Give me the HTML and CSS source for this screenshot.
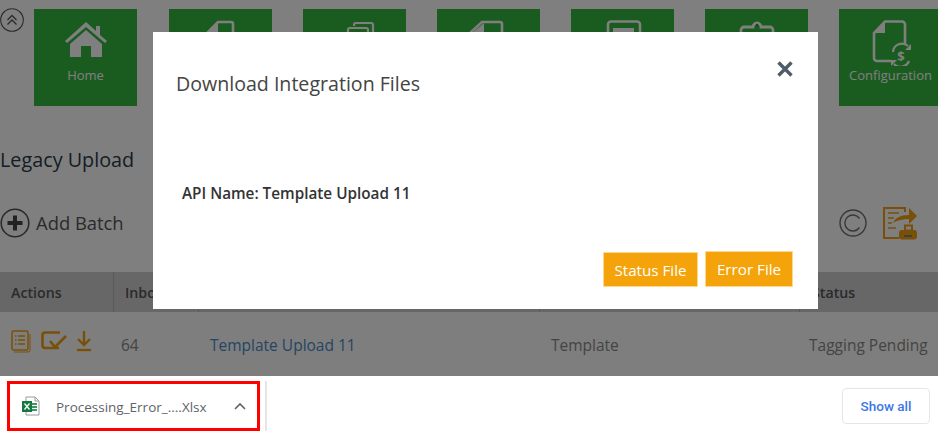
FILE: index.html
```html
<!DOCTYPE html>
<html lang="en">
<head>
<meta charset="utf-8">
<title>Download Integration Files</title>
<link rel="stylesheet" href="styles.css">
</head>
<body>
<div class="page">
  <div class="nav">
    <svg class="collapse" viewBox="0 0 24 24" width="24" height="24"><circle cx="12" cy="12" r="11.300" fill="none" stroke="#555" stroke-width="1.100"/><path d="M7.500 12l4.500-4.500 4.500 4.500M7.500 16.500l4.500-4.500 4.500 4.500" fill="none" stroke="#555" stroke-width="1.300"/></svg>
    <div class="tiles">
      <div class="tile">
        <svg class="tile-icon" viewBox="0 0 44 38" width="44" height="38"><path d="M1 21L22 2l10 9V6h4v9l7 6-2 2L22 7 3 23z" fill="#fff"/><path d="M6 24L22 10l16 14v13H27V26H17v11H6z" fill="#fff"/></svg>
        <span class="tile-label">Home</span>
      </div>
      <div class="tile"><svg class="tile-icon" viewBox="0 0 44 38" width="44" height="38"><path d="M9 14V12L19 2h13a2 2 0 0 1 2 2v20" fill="none" stroke="#fff" stroke-width="2.600"/><path d="M19 3v10H9z" fill="#fff"/></svg></div>
      <div class="tile"><svg class="tile-icon" viewBox="0 0 44 38" width="44" height="38"><path d="M21 6V5a2 2 0 0 1 2-2h15a2 2 0 0 1 2 2v18" fill="none" stroke="#fff" stroke-width="2.200"/><path d="M15 20V10a2 2 0 0 1 2-2h16a2 2 0 0 1 2 2v14" fill="none" stroke="#fff" stroke-width="2.200"/></svg></div>
      <div class="tile"><svg class="tile-icon" viewBox="0 0 44 38" width="44" height="38"><path d="M4 14v-2L15 2h18a2 2 0 0 1 2 2v20" fill="none" stroke="#fff" stroke-width="2.600"/><path d="M17 3v10H5z" fill="#fff"/></svg></div>
      <div class="tile"><svg class="tile-icon" viewBox="0 0 44 38" width="44" height="38"><rect x="7" y="1.500" width="32" height="26" rx="3" fill="none" stroke="#fff" stroke-width="2.600"/><rect x="12" y="8" width="21" height="5" fill="#fff"/></svg></div>
      <div class="tile"><svg class="tile-icon" viewBox="0 0 44 38" width="44" height="38"><path d="M6 30V10a3 3 0 0 1 3-3h9a4 4 0 0 1 8 0h9a3 3 0 0 1 3 3v20" fill="none" stroke="#fff" stroke-width="2.800"/><circle cx="22" cy="5" r="1.200" fill="#25882e"/></svg></div>
      <div class="tile">
        <svg class="tile-icon" viewBox="0 0 44 46" width="44" height="46"><path d="M22 41H8a3 3 0 0 1-3-3V13L16 1.500h17a3 3 0 0 1 3 3V25" fill="none" stroke="#fff" stroke-width="2.600"/><path d="M16 3v10H6z" fill="#fff"/><path d="M24 32a9 9 0 0 1 15-6M40 41a9 9 0 0 1-15 3" fill="none" stroke="#fff" stroke-width="2.200"/><path d="M36 30h6v-6zM28 40h-6v6z" fill="#fff"/><text x="32" y="40.500" class="dollar">$</text></svg>
        <span class="tile-label">Configuration</span>
      </div>
    </div>
  </div>
  <h1 class="title">Legacy Upload</h1>
  <div class="toolbar">
    <div class="add">
      <svg viewBox="0 0 30 30" width="30" height="30"><circle cx="15" cy="15" r="13.800" fill="none" stroke="#555" stroke-width="1.600"/><path d="M15 7.500v15M7.500 15h15" stroke="#444" stroke-width="4"/></svg>
      <span class="add-label">Add Batch</span>
    </div>
    <div class="tools">
      <svg viewBox="0 0 28 28" width="28" height="28"><circle cx="14" cy="14" r="13" fill="none" stroke="#707070" stroke-width="1.400"/><path d="M20.500 9.500a8 8 0 1 0 0 9" fill="none" stroke="#707070" stroke-width="1.400"/></svg>
      <svg viewBox="0 0 34 34" width="34" height="34"><path d="M22 6V2H1v30h15" fill="none" stroke="#f0a010" stroke-width="2"/><path d="M5 7h11M5 12h6M5 17h4M5 22h8" stroke="#f0a010" stroke-width="1.400"/><path d="M10 17c2-5 7-8 16-8V2l8 8-8 8v-5c-6 0-11 1-16 4z" fill="#f0a010"/><rect x="16" y="24" width="18" height="9.500" rx="3" fill="#f0a010"/><rect x="22" y="19.500" width="7" height="5" fill="none" stroke="#f0a010" stroke-width="2"/><rect x="21" y="29" width="8" height="2" fill="#808080"/></svg>
    </div>
  </div>
  <div class="grid-head">
    <div class="col col-actions">Actions</div>
    <div class="col col-inbox">Inbox</div>
    <div class="col col-name">Name</div>
    <div class="col col-type">Type</div>
    <div class="col col-status">Status</div>
  </div>
  <div class="grid-row">
    <div class="col col-actions row-icons">
      <svg viewBox="0 0 20 23" width="20" height="23"><rect x="1" y="1" width="16" height="19" rx="1.500" fill="none" stroke="#f0a010" stroke-width="1.500"/><path d="M4 6h1.500M7 6h7M4 10h1.500M7 10h7M4 14h1.500M7 14h7" stroke="#f0a010" stroke-width="1.500"/><path d="M3 22h14a2 2 0 0 0 2-2V4" fill="none" stroke="#f0a010" stroke-width="1"/></svg>
      <svg viewBox="0 0 26 20" width="26" height="20"><path d="M18 17H4a2.500 2.500 0 0 1-2.500-2.500v-11A2.500 2.500 0 0 1 4 1.500h15" fill="none" stroke="#f0a010" stroke-width="2.600"/><path d="M9 10l5 6L25 5" fill="none" stroke="#f0a010" stroke-width="2.600"/></svg>
      <svg viewBox="0 0 16 22" width="16" height="22"><path d="M8 1v13M2 9l6 6 6-6" fill="none" stroke="#f0a010" stroke-width="2.400"/><path d="M1 20h14" stroke="#f0a010" stroke-width="2.400"/></svg>
    </div>
    <div class="col col-inbox col-count">64</div>
    <a class="col col-name link" href="#">Template Upload 11</a>
    <div class="col col-type">Template</div>
    <div class="col col-status">Tagging Pending</div>
  </div>
  <div class="backdrop"></div>
  <div class="modal">
    <div class="modal-head">
      <h2 class="modal-title">Download Integration Files</h2>
      <svg class="close" viewBox="0 0 18 18" width="18" height="18"><path d="M2.500 2.500l13 13M15.500 2.500l-13 13" stroke="#4f5a6b" stroke-width="3.400"/></svg>
    </div>
    <p class="api-name">API Name: Template Upload 11</p>
    <div class="modal-actions">
      <button class="btn btn-status">Status File</button>
      <button class="btn btn-error">Error File</button>
    </div>
  </div>
</div>
<div class="download-bar">
  <div class="download-item">
    <svg class="xls" viewBox="0 0 18 20" width="18" height="20"><path d="M4 1h9l4 4v14H4z" fill="#fff" stroke="#9a9a9a" stroke-width="1"/><path d="M13 1v4h4" fill="none" stroke="#9a9a9a"/><rect x="10" y="7" width="5" height="2" fill="#3a9a5c"/><rect x="10" y="10" width="5" height="2" fill="#3a9a5c"/><rect x="10" y="13" width="5" height="2" fill="#3a9a5c"/><rect x="0" y="5" width="10" height="11" fill="#127a3e"/><path d="M2.500 7.500l5 6M7.500 7.500l-5 6" stroke="#fff" stroke-width="1.300"/></svg>
    <span class="file-name">Processing_Error_....Xlsx</span>
    <svg class="chev" viewBox="0 0 12 8" width="12" height="8"><path d="M1 7l5-5 5 5" fill="none" stroke="#5f6368" stroke-width="1.600"/></svg>
  </div>
  <div class="divider"></div>
  <button class="show-all">Show all</button>
</div>
</body>
</html>
```
FILE: styles.css
```css
* { box-sizing: border-box; }
html, body { margin: 0; padding: 0; }
body {
  width: 938px;
  height: 444px;
  overflow: hidden;
  background: #fff;
  font-family: "Open Sans", "Noto Sans", sans-serif;
  color: #333;
}
.page {
  position: relative;
  height: 376px;
  overflow: hidden;
  background: #fff;
}
.nav {
  display: flex;
  height: 106px;
  padding-top: 9px;
}
.collapse {
  flex: none;
  width: 24px;
  height: 24px;
  margin-top: -1px;
}
.tiles {
  display: flex;
  gap: 31px;
  margin-left: 10px;
}
.tile {
  flex: none;
  width: 103px;
  height: 97px;
  background: #34b83f;
  display: flex;
  flex-direction: column;
  align-items: center;
  padding-top: 11px;
  color: #fff;
}
.tile:first-child { margin-right: 1px; }
.tile-icon { display: block; }
.tile-label {
  font-size: 13px;
  line-height: 16px;
  margin-top: 9px;
  white-space: nowrap;
}
.tile:last-child .tile-label { margin-top: 1px; }
.dollar { font: bold 13px "Open Sans", sans-serif; fill: #fff; text-anchor: middle; }
.title {
  margin: 0;
  padding-top: 40px;
  font-size: 19.800px;
  line-height: 27px;
  font-weight: 400;
  color: #2a3a4a;
}
.toolbar {
  display: flex;
  justify-content: space-between;
  align-items: center;
  height: 36px;
  margin-top: 32px;
  padding-right: 21px;
}
.add {
  display: flex;
  align-items: center;
  gap: 6px;
  font-size: 18.400px;
  color: #555;
}
.add-label { margin-top: -2px; }
.tools { display: flex; align-items: center; gap: 16px; }
.grid-head, .grid-row {
  display: grid;
  grid-template-columns: 114px 85px 341px 260px 1fr;
  align-items: center;
}
.grid-head {
  margin-top: 31px;
  height: 40px;
  background: #cfcfcf;
  font-size: 14.200px;
  font-weight: 600;
  color: #555;
}
.grid-head .col { height: 40px; line-height: 42px; border-right: 1px solid #b5b5b5; }
.grid-head .col:last-child { border-right: 0; padding-left: 12px; }
.col { padding-left: 11px; white-space: nowrap; overflow: hidden; }
.col-status { padding-left: 9px; }
.col-count { padding-left: 7px; }
.grid-row {
  height: 64px;
  padding-top: 2px;
  background: #fdfdfd;
  font-size: 15.500px;
  color: #888;
}
.link { color: #4a8ac8; text-decoration: none; }
.row-icons { display: flex; align-items: center; gap: 10px; margin-top: -8px; }
.row-icons svg:last-child { margin-left: -1px; }
.backdrop {
  position: absolute;
  inset: 0;
  background: rgba(0, 0, 0, 0.5);
}
.modal {
  position: absolute;
  left: 153px;
  top: 32px;
  width: 665px;
  height: 277px;
  background: #fff;
  padding: 0 25px 22px 23px;
  display: flex;
  flex-direction: column;
}
.modal-head {
  display: flex;
  justify-content: space-between;
  align-items: flex-start;
  padding-top: 37px;
}
.modal-title {
  margin: 0;
  font-size: 19.600px;
  line-height: 30px;
  font-weight: 400;
  color: #444;
}
.close { margin: -9px -1px 0 0; }
.api-name {
  margin: 0;
  padding: 0 0 0 6px;
  margin-top: 83px;
  font-size: 15.300px;
  line-height: 22px;
  font-weight: 600;
  color: #333;
}
.modal-actions {
  display: flex;
  justify-content: flex-end;
  align-items: center;
  gap: 7px;
  margin-top: auto;
}
.btn {
  border: 1px solid #ffd890;
  background: #f4a40a;
  color: #fff;
  font-family: "Open Sans", sans-serif;
  font-size: 15.200px;
  height: 35px;
  padding: 0;
}
.btn-status { width: 95px; }
.btn-error { width: 88px; height: 36px; margin-top: -1px; }
.download-bar {
  display: flex;
  align-items: center;
  height: 68px;
  padding: 0 8px 9px 7px;
  background: #fff;
}
.download-item {
  display: flex;
  align-items: center;
  width: 253px;
  height: 50px;
  border: 3px solid #f00;
  padding-left: 12px;
}
.file-name {
  font-family: "Open Sans", sans-serif;
  font-size: 13.500px;
  color: #5f6368;
  margin-left: 16px;
  margin-top: 3px;
  width: 163px;
  white-space: nowrap;
}
.chev { margin-left: 15px; }
.divider {
  width: 2px;
  height: 50px;
  background: #e6e6e6;
  margin-left: 5px;
  margin-top: 1px;
}
.show-all {
  margin-left: auto;
  width: 88px;
  height: 36px;
  border: 1px solid #e3e6ea;
  border-radius: 4px;
  background: #fff;
  color: #3b78e7;
  font-family: "Roboto", sans-serif;
  font-size: 13.500px;
  font-weight: 500;
}
```
